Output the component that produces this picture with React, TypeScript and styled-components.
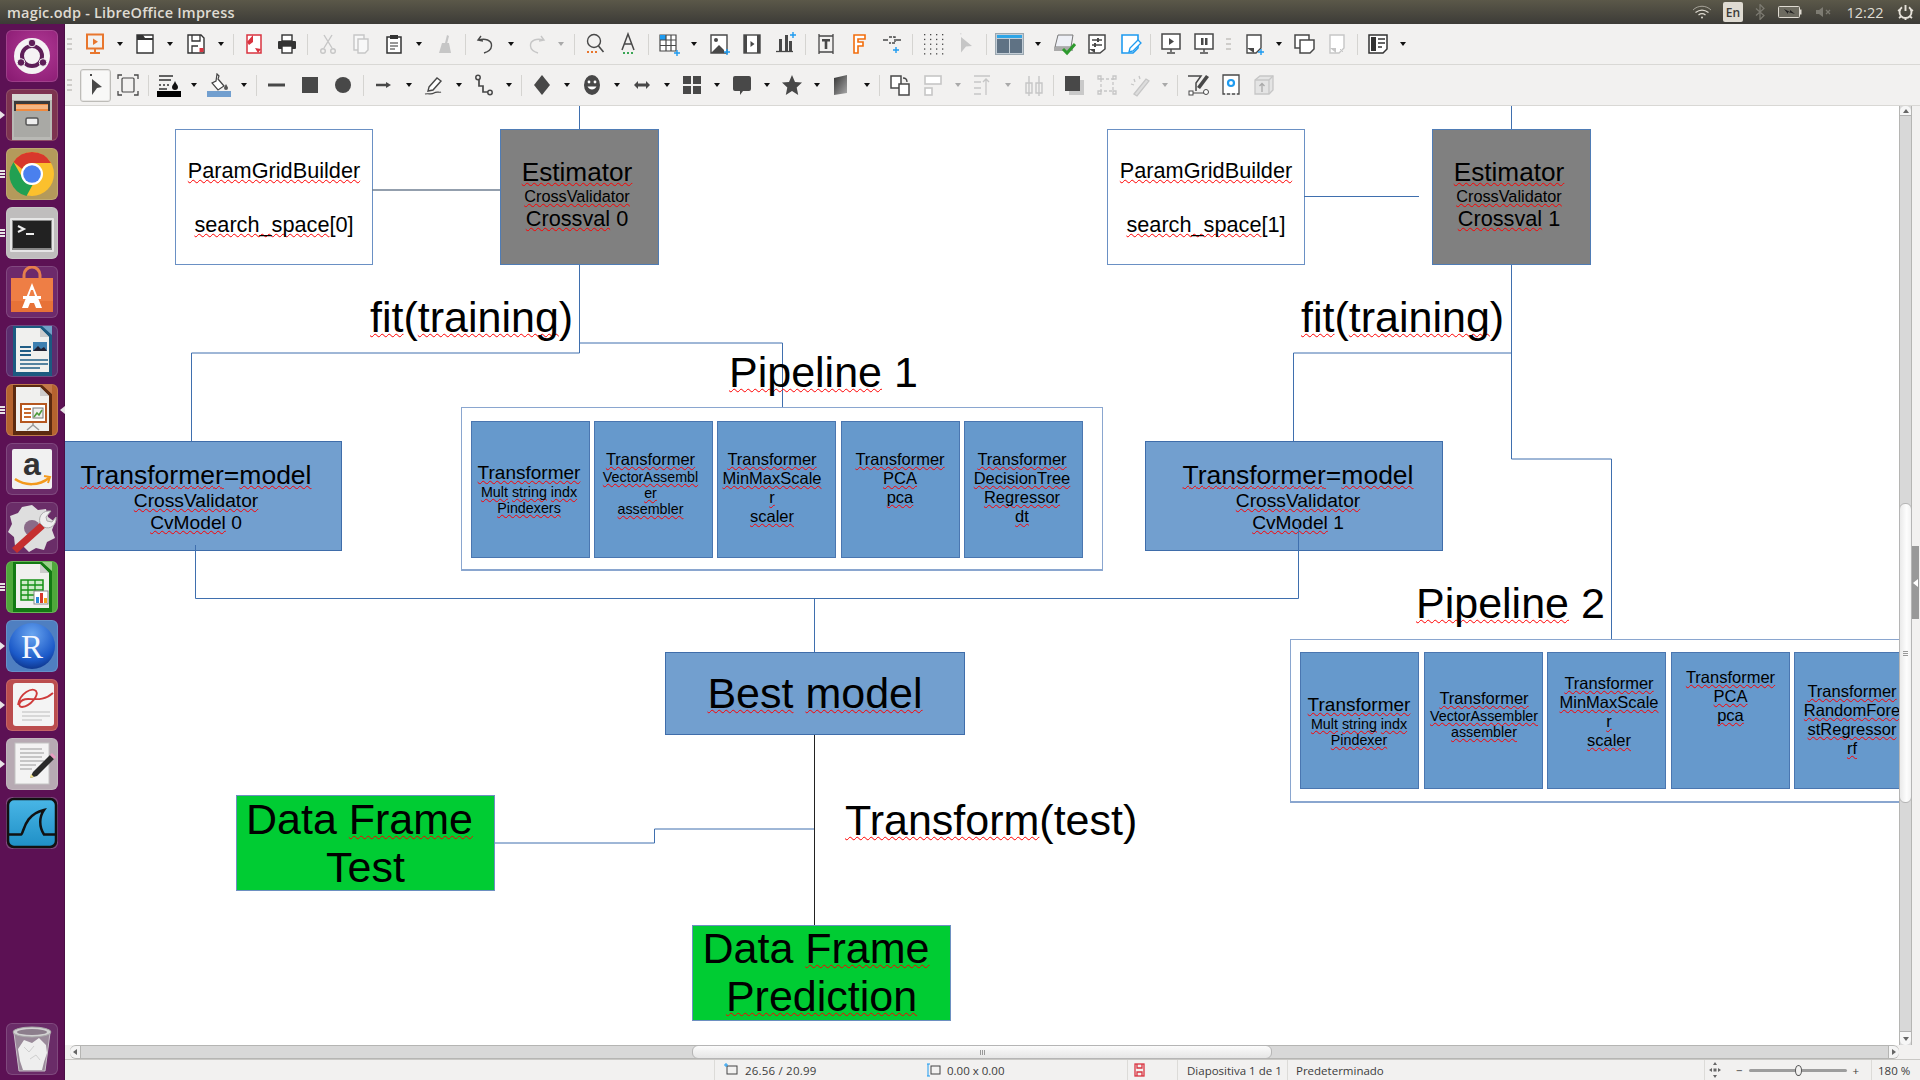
import React from 'react';
import styled, { createGlobalStyle } from 'styled-components';

const Global = createGlobalStyle`
  html, body { margin: 0; padding: 0; background: #f2f1f0; overflow: hidden; }
  #root { height: 100vh; }
  * { box-sizing: border-box; }
`;

const Root = styled.div`
  width: 1920px; height: 1080px; display: flex; flex-direction: column; overflow: hidden;
  font-family: "Open Sans", "Noto Sans", sans-serif;
`;
const TopBar = styled.header`
  height: 24px; flex: none; display: flex; align-items: center; padding: 0 0 0 7px;
  background: linear-gradient(#5b5849, #3c3b37);
`;
const Title = styled.div`
  flex: 1; color: #dfdbd2; font-size: 14.5px; font-weight: 600; letter-spacing: .2px; white-space: nowrap;
`;
const Tray = styled.div`
  display: flex; align-items: center; height: 24px;
`;
const TraySlot = styled.div<{ $w: number }>`
  width: ${p => p.$w}px; display: flex; align-items: center; justify-content: center; height: 24px;
`;
const LangBox = styled.div`
  width: 20px; height: 20px; border-radius: 2px; background: #dfdbd2; color: #3c3b37;
  font-size: 12px; font-weight: 600; display: flex; align-items: center; justify-content: center;
`;
const Clock = styled.div`
  color: #dfdbd2; font-size: 14.5px; width: 100%; text-align: center;
`;
const Body = styled.div`
  flex: 1; display: flex; min-height: 0;
`;
const Dock = styled.nav`
  width: 65px; flex: none; display: flex; flex-direction: column; gap: 7px; padding: 6px 0 5px 6px;
  background: #5c1154; border-right: 1px solid #4b0e45;
`;
const Tile = styled.div<{ $bg: string; $last?: boolean }>`
  position: relative; width: 52px; height: 52px; border-radius: 6px; flex: none;
  background: ${p => p.$bg}; box-shadow: inset 0 0 0 1px rgba(255,255,255,.14);
  margin-top: ${p => (p.$last ? 'auto' : '0')};
  svg { display: block; }
`;
const Pips = styled.div`
  position: absolute; left: -6px; top: 50%; transform: translateY(-50%);
  display: flex; flex-direction: column; gap: 1px;
`;
const Pip = styled.span`
  display: block; width: 5px; height: 2px; background: #e8e4e6;
`;
const RunArrow = styled.span`
  position: absolute; left: -6px; top: 50%; margin-top: -4px; width: 0; height: 0;
  border-left: 5px solid #e8e4e6; border-top: 4px solid transparent; border-bottom: 4px solid transparent;
`;
const FocusArrow = styled.span`
  position: absolute; right: -7px; top: 50%; margin-top: -4px; width: 0; height: 0;
  border-right: 5px solid #e8e4e6; border-top: 4px solid transparent; border-bottom: 4px solid transparent;
`;
const Main = styled.main`
  flex: 1; min-width: 0; display: flex; flex-direction: column;
`;
const Toolbar = styled.div<{ $dd: number }>`
  height: 41px; flex: none; display: flex; align-items: center; background: #f2f1f0;
  border-bottom: 1px solid #d9d8d5; padding-left: 1px;
  --dd: ${p => p.$dd}px;
`;
const Handle = styled.div<{ $w?: number; $center?: boolean }>`
  width: ${p => p.$w ?? 12}px; flex: none; height: 12px; display: flex; flex-direction: column;
  justify-content: space-between; align-items: ${p => (p.$center ? 'center' : 'flex-start')};
  padding-left: ${p => (p.$center ? 0 : 1)}px;
  span { display: block; width: 5px; height: 2px; background: #cfcdca; }
`;
const Tool = styled.div<{ $w?: number }>`
  width: ${p => p.$w ?? 33}px; flex: none; height: 40px; display: flex; align-items: center; justify-content: center;
`;
const ActiveTool = styled.div`
  width: 31px; height: 33px; border-radius: 3px; border: 1px solid #bdbcb8; background: #f8f8f7;
  display: flex; align-items: center; justify-content: center; box-shadow: 0 0 0 1px #e7e6e4 inset;
`;
const Drop = styled.div`
  width: var(--dd); flex: none; display: flex; align-items: center; justify-content: center;
`;
const DropArrow = styled.span<{ $off?: boolean }>`
  width: 0; height: 0; display: block;
  border-top: 4px solid ${p => (p.$off ? '#a9a9a9' : '#111')};
  border-left: 3.5px solid transparent; border-right: 3.5px solid transparent;
`;
const Sep = styled.div`
  width: 8px; flex: none; display: flex; justify-content: center;
  &::after { content: ''; display: block; width: 1px; height: 21px; background: #d5d4d1; }
`;
const Work = styled.div`
  flex: 1; display: flex; min-height: 0;
`;
const Canvas = styled.div`
  position: relative; flex: 1; min-width: 0; background: #fff; overflow: hidden;
`;
const VScroll = styled.div`
  width: 13px; flex: none; display: flex; flex-direction: column; align-items: stretch;
  background: #d8d8d8; border-left: 1px solid #b5b5b3; border-right: 1px solid #b5b5b3;
`;
const VStep = styled.div`
  height: 10px; flex: none; background: #f6f6f6; border-bottom: 1px solid #b0b0b0; border-radius: 5px 5px 0 0;
  display: flex; align-items: center; justify-content: center;
`;
const VStepDown = styled(VStep)`
  border-bottom: 0; border-top: 1px solid #b0b0b0; border-radius: 0 0 5px 5px; height: 14px;
`;
const VThumb = styled.div`
  height: 300px; flex: none; margin-top: 387px; margin-bottom: auto; border-radius: 6px;
  background: linear-gradient(90deg, #eaeaea, #fdfdfd 60%, #f2f2f2); border: 1px solid #b5b5b5;
  margin-left: -1px; margin-right: -1px;
  display: flex; flex-direction: column; gap: 1px; align-items: center; justify-content: center;
  span { width: 5px; height: 1px; background: #999; display: block; }
`;
const SidePanel = styled.div`
  width: 8px; flex: none; background: #f2f1f0; padding-top: 440px;
`;
const SideHandle = styled.div`
  width: 7px; height: 73px; background: #999; display: flex; align-items: center; justify-content: center;
  &::after { content: ''; border-right: 5px solid #fff; border-top: 4px solid transparent; border-bottom: 4px solid transparent; }
`;
const HRow = styled.div`
  height: 14px; flex: none; display: flex; background: #f2f1f0;
`;
const HTrack = styled.div`
  width: 1829px; margin-left: 5px; flex: none; display: flex; align-items: stretch;
  background: #d8d8d8; border-top: 1px solid #b5b5b3; border-bottom: 1px solid #b5b5b3; border-radius: 6px;
`;
const HStep = styled.div`
  width: 11px; flex: none; display: flex; align-items: center; justify-content: center;
  background: #f4f4f4; border-radius: 6px 0 0 6px; border-right: 1px solid #b5b5b3;
`;
const HStepEnd = styled(HStep)`
  border-right: 0; border-left: 1px solid #b5b5b3; border-radius: 0 6px 6px 0; margin-left: auto;
`;
const HThumb = styled.div`
  width: 580px; margin-left: 611px; border-radius: 6px; border: 1px solid #b5b5b5; margin-top: -1px; margin-bottom: -1px;
  background: linear-gradient(#fbfbfb, #e6e6e6);
  display: flex; gap: 1px; align-items: center; justify-content: center;
  span { height: 5px; width: 1px; background: #999; display: block; }
`;
const Tri = styled.span<{ $dir: 'l' | 'r' | 'u' | 'd' }>`
  width: 0; height: 0; display: block;
  ${p => p.$dir === 'l' && 'border-right:4px solid #666;border-top:3px solid transparent;border-bottom:3px solid transparent;'}
  ${p => p.$dir === 'r' && 'border-left:4px solid #666;border-top:3px solid transparent;border-bottom:3px solid transparent;'}
  ${p => p.$dir === 'u' && 'border-bottom:4px solid #666;border-left:3px solid transparent;border-right:3px solid transparent;'}
  ${p => p.$dir === 'd' && 'border-top:4px solid #666;border-left:3px solid transparent;border-right:3px solid transparent;'}
`;
const Status = styled.footer`
  height: 21px; flex: none; display: flex; align-items: center; background: #f2f1f0; border-top: 1px solid #c9c8c5;
  font-size: 11.5px; color: #3c3c3c; font-family: "Open Sans", sans-serif;
`;
const Cell = styled.div<{ $w?: number; $pad?: number; $gap?: number; $center?: boolean; $plain?: boolean }>`
  width: ${p => (p.$w ? `${p.$w}px` : 'auto')}; flex: ${p => (p.$w ? 'none' : '1')}; height: 100%;
  display: flex; align-items: center; white-space: nowrap;
  justify-content: ${p => (p.$center ? 'center' : 'flex-start')};
  padding-left: ${p => p.$pad ?? 0}px; gap: ${p => p.$gap ?? 0}px;
  border-left: ${p => (p.$plain ? '0' : '1px solid #dcdbd8')};
`;
const Coord = styled.span`
  letter-spacing: .2px;
`;
const ZoomTrack = styled.div`
  position: relative; width: 98px; height: 3px; background: #9d9d9d; border-radius: 2px;
`;
const ZoomKnob = styled.span`
  position: absolute; left: 46px; top: -4px; width: 7px; height: 11px; border-radius: 50%;
  background: #f2f1f0; border: 1px solid #555;
`;

/* ---------- diagram ---------- */
const OX = 65; const OY = 106;
type Box = { $x: number; $y: number; $w: number; $h: number; $pb?: number; $pr?: number; $pl?: number; $pt?: number };
const Node = styled.div<Box>`
  position: absolute; left: ${p => p.$x - OX}px; top: ${p => p.$y - OY}px;
  width: ${p => p.$w}px; height: ${p => p.$h}px;
  display: flex; flex-direction: column; align-items: center; justify-content: center;
  padding: ${p => p.$pt ?? 0}px ${p => p.$pr ?? 0}px ${p => p.$pb ?? 0}px ${p => p.$pl ?? 0}px;
  font-family: "Liberation Sans", Arial, sans-serif; color: #000; white-space: nowrap;
  border: 1px solid #4f7cb5;
`;
const ParamBox = styled(Node)`background: #fff; border-color: #6a90c4;`;
const EstimatorBox = styled(Node)`background: #808080;`;
const ModelBox = styled(Node)`background: #729fcf; border-color: #3f6daa;`;
const StepCell = styled(Node)`background: #6699cc; border-color: #4a76b0;`;
const FrameBox = styled(Node)`background: #fff; border-color: #8aa6cf; border-bottom-width: 2px; align-items: flex-start;`;
const GreenBox = styled(Node)`background: #00cc33; border-color: #6d90c0; justify-content: flex-start;`;
const Txt = styled.div<{ $s: number; $lh?: number; $pr?: number; $mt?: number }>`
  font-size: ${p => p.$s}px; line-height: ${p => (p.$lh ? `${p.$lh}px` : 'normal')};
  padding-right: ${p => p.$pr ?? 0}px; margin-top: ${p => p.$mt ?? 0}px;
`;
const Sq = styled.span`
  text-decoration: underline wavy #f00 1px; text-underline-offset: 1px; text-decoration-skip-ink: none;
`;
const Label = styled.div<{ $x: number; $y: number }>`
  position: absolute; left: ${p => p.$x - OX}px; top: ${p => p.$y - OY}px; white-space: nowrap;
  font: 43px "Liberation Sans", Arial, sans-serif; color: #000;
`;
const Wires = styled.svg`
  position: absolute; left: 0; top: 0; width: 1834px; height: 940px; pointer-events: none;
`;

const words = (s: string) => s.split(' ').map((w, i) => (
  <React.Fragment key={i}>{i > 0 ? ' ' : ''}<Sq>{w}</Sq></React.Fragment>
));

type CellDef = { x: number; lines: [string, number][]; pb?: number; pr?: number; pl?: number };
const p1Cells: CellDef[] = [
  { x: 471, lines: [['Transformer', 19], ['Mult string indx', 14.3], ['Pindexers', 14.3]], pb: 2, pr: 3 },
  { x: 594, lines: [['Transformer', 16.5], ['VectorAssembl', 14.3], ['er', 14.3], ['assembler', 14.3]], pb: 12, pr: 6 },
  { x: 717, lines: [['Transformer', 16.5], ['MinMaxScale', 16.5], ['r', 16.5], ['scaler', 16.5]], pb: 4, pr: 9 },
  { x: 841, lines: [['Transformer', 16.5], ['PCA', 16.5], ['pca', 16.5]], pb: 23, pr: 1 },
  { x: 964, lines: [['Transformer', 16.5], ['DecisionTree', 16.5], ['Regressor', 16.5], ['dt', 16.5]], pb: 4, pr: 3 },
];
const p2Cells: CellDef[] = [
  { x: 1300, lines: [['Transformer', 19], ['Mult string indx', 14.3], ['Pindexer', 14.3]], pr: 1 },
  { x: 1424, lines: [['Transformer', 16.5], ['VectorAssembler', 14.3], ['assembler', 14.3]], pb: 13, pl: 1 },
  { x: 1547, lines: [['Transformer', 16.5], ['MinMaxScale', 16.5], ['r', 16.5], ['scaler', 16.5]], pb: 18, pl: 5 },
  { x: 1671, lines: [['Transformer', 16.5], ['PCA', 16.5], ['pca', 16.5]], pb: 48 },
  { x: 1794, lines: [['Transformer', 16.5], ['RandomFore', 16.5], ['stRegressor', 16.5], ['rf', 16.5]], pb: 2, pr: 3 },
];
const Steps = ({ cells, y }: { cells: CellDef[]; y: number }) => (
  <>
    {cells.map(c => (
      <StepCell key={c.x} $x={c.x} $y={y} $w={119} $h={137} $pb={c.pb} $pr={c.pr} $pl={c.pl}>
        {c.lines.map(([t, s], i) => <Txt key={i} $s={s}>{words(t)}</Txt>)}
      </StepCell>
    ))}
  </>
);
const Param = ({ x, n }: { x: number; n: number }) => (
  <ParamBox $x={x} $y={129} $w={198} $h={136}>
    <Txt $s={21.7} $mt={2}><Sq>ParamGridBuilder</Sq></Txt>
    <Txt $s={21.7} $mt={28}><Sq>search_space</Sq>[{n}]</Txt>
  </ParamBox>
);
const Estimator = ({ x, n }: { x: number; n: number }) => (
  <EstimatorBox $x={x} $y={129} $w={159} $h={136} $pb={6} $pr={5}>
    <Txt $s={26.2}><Sq>Estimator</Sq></Txt>
    <Txt $s={16.3} $mt={-1}><Sq>CrossValidator</Sq></Txt>
    <Txt $s={21.7}><Sq>Crossval</Sq> {n}</Txt>
  </EstimatorBox>
);
const Model = ({ x, n, pl }: { x: number; n: number; pl: number }) => (
  <ModelBox $x={x} $y={441} $w={298} $h={110} $pl={pl} $pt={1}>
    <Txt $s={26.5}><Sq>Transformer</Sq>=<Sq>model</Sq></Txt>
    <Txt $s={19.2} $mt={-1}><Sq>CrossValidator</Sq></Txt>
    <Txt $s={19.2}><Sq>CvModel</Sq> {n}</Txt>
  </ModelBox>
);

const Diagram = () => (
  <Canvas>
    <Param x={175} n={0} />
    <Estimator x={500} n={0} />
    <Param x={1107} n={1} />
    <Estimator x={1432} n={1} />
    <Model x={44} n={0} pl={6} />
    <Model x={1145} n={1} pl={8} />
    <FrameBox $x={461} $y={407} $w={642} $h={164} />
    <Steps cells={p1Cells} y={421} />
    <FrameBox $x={1290} $y={639} $w={700} $h={164} />
    <Steps cells={p2Cells} y={652} />
    <ModelBox $x={665} $y={652} $w={300} $h={83}>
      <Txt $s={43}><Sq>Best</Sq> <Sq>model</Sq></Txt>
    </ModelBox>
    <GreenBox $x={236} $y={795} $w={259} $h={96}>
      <Txt $s={43} $lh={47.5} $pr={12}>Data <Sq>Frame</Sq></Txt>
      <Txt $s={43} $lh={47.5}>Test</Txt>
    </GreenBox>
    <GreenBox $x={692} $y={925} $w={259} $h={96}>
      <Txt $s={43} $lh={47.5} $pr={11} $mt={-1}>Data <Sq>Frame</Sq></Txt>
      <Txt $s={43} $lh={47.5}><Sq>Prediction</Sq></Txt>
    </GreenBox>
    <Wires viewBox="65 106 1834 940" fill="none">
      <g stroke="#3f6fae" strokeWidth="1">
        <path d="M579.5 106V129M1511.5 106V129" />
        <path d="M579.5 265V353H191.5V441" />
        <path d="M579.5 343H782.5V407" />
        <path d="M1511.5 265V459H1611.5V639" />
        <path d="M1511.5 353H1293.5V441" />
        <path d="M195.5 545V598.5H1298.5V523" />
        <path d="M814.5 598.5V652" />
        <path d="M495 843H654.5V829H814.5" />
        <path d="M1304 196.5H1419" />
      </g>
      <path d="M372 190H500" stroke="#6f7f92" strokeWidth="1.6" />
      <path d="M814.5 735V925" stroke="#222" strokeWidth="1" />
    </Wires>
    <Label $x={370} $y={293}><Sq>fit</Sq>(<Sq>training</Sq>)</Label>
    <Label $x={1301} $y={293}><Sq>fit</Sq>(<Sq>training</Sq>)</Label>
    <Label $x={729} $y={348}><Sq>Pipeline</Sq> 1</Label>
    <Label $x={1416} $y={579}><Sq>Pipeline</Sq> 2</Label>
    <Label $x={845} $y={796}><Sq>Transform</Sq>(test)</Label>
  </Canvas>
);

/* ---------- toolbar icons ---------- */
const D = '#484848'; const G = '#c6c6c6'; const O = '#e8762d'; const B = '#1e9bf0'; const R = '#d9333f';
const plus = (x: number, y: number) => <path d={`M${x - 3} ${y}h6M${x} ${y - 3}v6`} stroke={B} strokeWidth="1.4" fill="none" />;
const page = (c: string, f = '#fff') => <path d="M5 3h14v13l-5 5H5z" fill={f} stroke={c} strokeWidth="1.4" />;
const icons: Record<string, React.ReactNode> = {
  impress: <><g stroke={O} strokeWidth="2" fill="none"><rect x="4" y="2.5" width="16" height="14" /><path d="M12 17v3M7 21h10" /></g><path d="M10 6.5l5 3.2-5 3.2z" fill={O} /></>,
  open: <><path d="M4 3h16v18H4z" fill="#fff" stroke="#333" strokeWidth="1.4" /><path d="M4 3h6l2 3h8v2H4z" fill="#333" /></>,
  save: <><path d="M4 3h13l3 3v15H4z" fill="#fff" stroke="#333" strokeWidth="1.4" /><path d="M8 3v6h8V3M8 21v-7h6" fill="none" stroke="#333" strokeWidth="1.3" /><rect x="15.5" y="16" width="4" height="4" fill={R} /></>,
  pdf: <><path d="M5 3h14v18H5z" fill="#fff" stroke={R} strokeWidth="1.5" /><path d="M5 10l6-7v7l-4 3zM13 16l6 1-3 4z" fill={R} /></>,
  print: <><rect x="7" y="3" width="10" height="6" fill="#fff" stroke="#333" strokeWidth="1.4" /><rect x="3" y="9" width="18" height="8" rx="1" fill="#333" /><rect x="7" y="14" width="10" height="7" fill="#fff" stroke="#333" strokeWidth="1.4" /></>,
  cut: <g stroke={G} strokeWidth="1.4" fill="none"><path d="M8 3l8 13M16 3L8 16" /><circle cx="7" cy="19" r="2.3" /><circle cx="17" cy="19" r="2.3" /></g>,
  copy: <g stroke={G} strokeWidth="1.4" fill="#f8f8f8"><path d="M5 3h10v15H5z" /><path d="M9 7h10v11l-3 3H9z" /></g>,
  paste: <><path d="M5 5h14v16H5z" fill="#fff" stroke="#333" strokeWidth="1.5" /><rect x="8" y="3" width="8" height="4" fill="#333" /><path d="M8 11h8M8 14h8M8 17h5" stroke="#333" strokeWidth="1.2" /></>,
  brush: <><path d="M14 3l2 1-2 8-2-1z" fill={G} /><path d="M9 11h7l2 10H6z" fill={G} /></>,
  undo: <path d="M7 4L4 8l5 1M4.5 8C11 6 18 8 17.5 14c-.3 4-4 6-7.5 7" fill="none" stroke={D} strokeWidth="1.4" />,
  redo: <path d="M17 4l3 4-5 1M19.500 8C13 6 6 8 6.500 14c.3 4 4 6 7.500 7" fill="none" stroke={G} strokeWidth="1.4" />,
  find: <><circle cx="11" cy="9" r="6.500" fill="none" stroke={D} strokeWidth="1.4" /><path d="M15.500 14l5 6" stroke={D} strokeWidth="1.6" /><path d="M4 20h2M8 20h2M12 20h2" stroke={O} strokeWidth="1.8" /></>,
  spell: <><path d="M6 18L12 2l6 16M8.500 12h7" fill="none" stroke={D} strokeWidth="1.5" /><path d="M7 21h2M11 21h2M15 21h2" stroke="#3aa655" strokeWidth="1.8" /></>,
  table: <><path d="M3 3h16v16H3z" fill="#fff" stroke={D} strokeWidth="1.2" /><rect x="3" y="3" width="6" height="5" fill={B} /><path d="M3 8h16M3 13.500h16M9 3v16M14 3v16" stroke={D} strokeWidth="1.2" />{plus(20, 21)}</>,
  image: <><path d="M4 3h16v18H4z" fill="#fff" stroke={D} strokeWidth="1.4" /><circle cx="9" cy="8" r="2" fill={D} /><path d="M4 21l8-8 5 5v3z" fill={D} />{plus(20, 20)}</>,
  film: <><rect x="4" y="3" width="16" height="18" fill="#fff" stroke={D} strokeWidth="1.4" /><path d="M4 3h3v18H4zM17 3h3v18h-3z" fill={D} /><path d="M10.500 9l4 3-4 3z" fill={D} /></>,
  chart: <><path d="M6 7h3v12H6zM12 3h3v16h-3zM16 9h3v10h-3z" fill={D} /><path d="M3 19.500h17" stroke={D} strokeWidth="1.3" />{plus(20, 3)}</>,
  textbox: <><path d="M5 4h14M5 20h14M5 2v20M19 2v20" stroke={D} strokeWidth="1.3" fill="none" /><path d="M8 7h8v2.500h-2.700V17h-2.600V9.500H8z" fill={D} /></>,
  fontwork: <path d="M7 3h11v4h-7v3h5v4h-5v7H7z" fill="#fff" stroke="#f26d0c" strokeWidth="1.6" />,
  link: <><path d="M3 8h5M16 8h5" stroke={D} strokeWidth="1.4" /><path d="M9 5h6v6H9" fill="none" stroke={D} strokeWidth="1.4" strokeDasharray="3 1" />{plus(16, 18)}</>,
  grid: <g fill={D}>{[0, 1, 2, 3, 4].flatMap(r => [0, 1, 2, 3].map(c => <rect key={`${r}${c}`} x={3 + c * 6} y={2 + r * 4.800} width="1.300" height="1.300" />))}</g>,
  cursor: <><rect x="6" y="1" width="1.500" height="1.500" fill="#ddd" /><path d="M7 5l11 9-6 .5-5 6z" fill={G} /></>,
  layout: <><rect x="0.500" y="0.500" width="28" height="21" fill="#c3cdd6" stroke="#9aa7b0" /><rect x="2" y="2" width="25" height="3" fill="#2ea5e6" /><rect x="2" y="6" width="12" height="14" fill="#5f7284" /><rect x="15" y="6" width="12" height="14" fill="#5f7284" /></>,
  master: <><path d="M6 3h15l-2 12H3z" fill="#eef0f6" stroke="#777" /><path d="M2 15h19v4H2z" fill="#aaa" /><path d="M11 17l4 4 8-9" fill="none" stroke="#2e9a2e" strokeWidth="3" /></>,
  props: <><path d="M4 3h16v14l-5 4H4z" fill="#fff" stroke={D} strokeWidth="1.500" /><path d="M7 8h10M7 13h10" stroke={D} strokeWidth="1.300" /><rect x="12" y="6" width="2" height="4" fill={D} /><rect x="9" y="11" width="2" height="4" fill={D} /><path d="M4 17h6v4z" fill={D} /></>,
  note: <><path d="M4 3h16v13l-5 5H4z" fill="#fff" stroke={B} strokeWidth="1.600" /><path d="M11 20l1-4 8-8 3 3-8 8z" fill="#fff" stroke={B} strokeWidth="1.300" /></>,
  present: <><rect x="3" y="2" width="18" height="15" fill="#fff" stroke={D} strokeWidth="1.500" /><path d="M10 6l5 3.500-5 3.500z" fill={D} /><path d="M12 17v3M8 21h8" stroke={D} strokeWidth="1.400" /></>,
  pause: <><rect x="3" y="2" width="18" height="15" fill="#fff" stroke={D} strokeWidth="1.500" /><path d="M9 6h2.500v7H9zM13 6h2.500v7H13z" fill={D} /><path d="M12 17v3M8 21h8" stroke={D} strokeWidth="1.400" /></>,
  newslide: <>{page(D)}<path d="M5 16h7v5z" fill={D} />{plus(19, 20)}</>,
  dup: <><path d="M3 3h14v13H3z" fill="#fff" stroke={D} strokeWidth="1.500" /><path d="M8 8h14v9l-4 4H8z" fill="#fff" stroke={D} strokeWidth="1.500" /></>,
  del: <>{page(G)}<path d="M5 16h6v5z" fill={G} /><path d="M15 17l3 3M18 17l-3 3" stroke={G} /></>,
  panel: <><path d="M3 3h18v14l-4 4H3z" fill="#fff" stroke="#333" strokeWidth="1.500" /><rect x="5" y="5" width="5" height="14" fill="#333" /><path d="M12 7h7M12 11h7M12 15h4" stroke="#333" strokeWidth="1.300" /></>,
  select: <><rect x="7" y="1" width="2" height="2" fill={D} /><path d="M9 6l10 8-5 1-5 7z" fill={D} /></>,
  fit: <><rect x="6" y="5" width="12" height="14" rx="1" fill="none" stroke={D} strokeWidth="1.200" /><path d="M2 6V2h4M18 2h4v4M2 18v4h4M18 22h4v-4" fill="none" stroke={D} strokeWidth="1.300" /></>,
  linecolor: <><path d="M2 3h14M2 7h12" stroke="#333" strokeWidth="1.500" /><path d="M2 12h2M6 12h2M10 12h2M2 16h8" stroke="#333" strokeWidth="1.300" /><path d="M18 8c1 3 3 4 3 6a3 3 0 0 1-6 0c0-2 2-3 3-6z" fill="#111" /><rect x="0" y="18" width="24" height="6" fill="#000" /></>,
  fill: <><path d="M10 1l2 2-1 3 6 7-6 4-6-7 4-2z" fill="#fff" stroke="#444" strokeWidth="1.200" /><path d="M19 11c1 2 2 3 2 4a2 2 0 0 1-4 0c0-1 1-2 2-4z" fill="#555" /><rect x="0" y="18" width="24" height="6" fill="#729fcf" /></>,
  line: <path d="M3 12h17" stroke={D} strokeWidth="3" />,
  rect: <rect x="4" y="4" width="16" height="16" fill={D} />,
  ellipse: <circle cx="12" cy="12" r="8" fill={D} />,
  free: <><path d="M7 14l8-9 4 3-8 9-5 1z" fill="#fff" stroke={D} strokeWidth="1.400" /><path d="M3 21c4-1 6 1 9-1s5 0 7-1" fill="none" stroke={D} strokeWidth="1.200" /></>,
  connector: <><circle cx="6" cy="4.500" r="2.200" fill="none" stroke={D} strokeWidth="1.500" /><circle cx="18" cy="19.500" r="2.200" fill="none" stroke={D} strokeWidth="1.500" /><path d="M7 7v6h4v6h5" fill="none" stroke={D} strokeWidth="1.700" /></>,
  diamond: <path d="M12 2l8 10-8 10-8-10z" fill={D} />,
  smile: <><ellipse cx="12" cy="12" rx="8" ry="10" fill={D} /><circle cx="9" cy="9" r="1.400" fill="#fff" /><circle cx="15" cy="9" r="1.400" fill="#fff" /><path d="M7.500 13.500c2 4 7 4 9 0z" fill="#fff" /></>,
  blockarrow: <path d="M4 12l4-4v2.500h8V8l4 4-4 4v-2.500H8V16z" fill={D} />,
  flow: <path d="M3 3h8v8H3zM13 3h8v8h-8zM3 13h8v8H3zM13 13h8v8h-8z" fill={D} />,
  callout: <path d="M5 3h14a2 2 0 0 1 2 2v11a2 2 0 0 1-2 2h-6l-3 4v-4H5a2 2 0 0 1-2-2V5a2 2 0 0 1 2-2z" fill={D} />,
  star: <path d="M12 2l3 7 7 .6-5.300 4.800L18.200 22 12 18l-6.200 4 1.500-7.600L2 9.600 9 9z" fill={D} />,
  solid3d: <><defs><linearGradient id="g3" x1="0" x2="1" y1="0" y2="1"><stop offset="0" stopColor="#333" /><stop offset="1" stopColor="#aaa" /></linearGradient></defs><path d="M4 5l13-3v18L4 22z" fill="url(#g3)" /></>,
  arrange: <><rect x="3" y="3" width="10" height="12" fill="#fff" stroke={D} strokeWidth="1.500" /><rect x="11" y="11" width="10" height="11" fill="#fff" stroke={D} strokeWidth="1.500" /><path d="M15 5c3 0 4 2 4 4" fill="none" stroke={D} strokeWidth="1.300" /></>,
  align: <><rect x="4" y="3" width="16" height="8" fill="#fff" stroke={G} strokeWidth="1.600" /><rect x="4" y="15" width="7" height="7" fill="#fff" stroke={G} strokeWidth="1.600" /></>,
  dist: <path d="M3 3h16M3 9h7M3 15h7M3 21h7M15 22V6M12 9l3-3 3 3" fill="none" stroke={G} strokeWidth="1.300" />,
  space: <path d="M5 10h6v10H5zM15 10h6v10h-6zM8 3v20M18 3v20" fill="none" stroke={G} strokeWidth="1.400" />,
  shadow: <><rect x="7" y="7" width="15" height="15" fill="#c9c9c9" /><rect x="3" y="3" width="15" height="15" fill={D} /></>,
  crop: <><rect x="6" y="6" width="12" height="12" fill="none" stroke={G} strokeWidth="1.300" strokeDasharray="3 2" /><path d="M3 3h3v3H3zM18 3h3v3h-3zM3 18h3v3H3zM18 18h3v3h-3z" fill="none" stroke={G} strokeWidth="1.300" /></>,
  wand: <path d="M6 21L18 6l3 2L9 23zM6 6l1 3M11 3l1 3M3 11l3 1" fill="#ddd" stroke={G} strokeWidth="1.300" />,
  edit: <><path d="M2 3h13l-5 7v8" fill="none" stroke={D} strokeWidth="1.500" /><path d="M11 14L20 2l3 2-9 12z" fill={D} /><rect x="3" y="18" width="4" height="4" fill="#fff" stroke={D} /><circle cx="20" cy="19" r="2.500" fill="#fff" stroke={D} /><path d="M7 20h11" stroke={D} /></>,
  glue: <><path d="M4 2h16v19H4z" fill="#fff" stroke={D} strokeWidth="1.300" /><circle cx="12" cy="10" r="3" fill="#fff" stroke={B} strokeWidth="2.200" /><path d="M6 21h2M11 21h2M16 21h2" stroke="#fff" strokeWidth="1.500" /></>,
  extr: <><path d="M3 7l5-4h13v14l-4 4H3z" fill="#e4e4e4" stroke={G} strokeWidth="1.300" /><path d="M3 7h14v14M17 7l4-4" fill="none" stroke={G} strokeWidth="1.300" /><path d="M10 19v-8M7.500 13L10 10.500l2.500 2.500" fill="none" stroke="#aaa" strokeWidth="1.300" /></>,
  arrowline: <><path d="M4 12h11" stroke={D} strokeWidth="2.500" /><path d="M14 9l5 3-5 3z" fill={D} /></>,
};
const Ico = ({ n, w = 24, h = 24 }: { n: string; w?: number; h?: number }) => (
  <svg width={w} height={h} viewBox={`0 0 ${w} ${h}`}>{icons[n]}</svg>
);
const HandleMark = ({ w, center }: { w?: number; center?: boolean }) => <Handle $w={w} $center={center}><span /><span /><span /></Handle>;

const Items = ({ list }: { list: string[] }) => (
  <>
    {list.map((it, i) => {
      if (it === '|') return <Sep key={i} />;
      if (it === 'v') return <Drop key={i}><DropArrow /></Drop>;
      if (it === 'x') return <Drop key={i}><DropArrow $off /></Drop>;
      if (it === '=') return <HandleMark key={i} w={17} center />;
      if (it === 'layout') return <Tool key={i} $w={39}><Ico n="layout" w={30} h={22} /></Tool>;
      if (it === 'select') return <Tool key={i}><ActiveTool><Ico n="select" /></ActiveTool></Tool>;
      return <Tool key={i}><Ico n={it} /></Tool>;
    })}
  </>
);
const row1 = ['impress','v','open','v','save','v','|','pdf','print','|','cut','copy','paste','v','brush','|','undo','v','redo','x','|','find','spell','|','table','v','image','film','chart','|','textbox','fontwork','link','|','grid','cursor','|','layout','v','master','props','note','|','present','pause','=','newslide','v','dup','del','|','panel','v'];
const row2 = ['select','fit','|','linecolor','v','fill','v','|','line','rect','ellipse','|','arrowline','v','free','v','connector','v','|','diamond','v','smile','v','blockarrow','v','flow','v','callout','v','star','v','solid3d','v','|','arrange','align','x','dist','x','space','|','shadow','crop','wand','x','|','edit','glue','extr'];

/* ---------- dock ---------- */
const Z = ({ children }: { children: React.ReactNode }) => <svg width="52" height="52" viewBox="0 0 52 52">{children}</svg>;
const DocIcon = ({ frame, corner, children }: { frame: string; corner: string; children: React.ReactNode }) => (
  <Z>
    <path d="M7 1h30l9 9v41H7z" fill={frame} />
    <path d="M36 1l10 9v-9z" fill={corner} />
    <path d="M10 3h24l9 9v35H10z" fill="#f0f0ee" />
    <path d="M34 3l9 9h-9z" fill="#ccc" />
    {children}
  </Z>
);
const dock: { bg: string; pip?: number; arrow?: boolean; icon: React.ReactNode }[] = [
  { bg: 'radial-gradient(circle at 60% 40%, #b23a96, #86186f)', icon: <Z><circle cx="26" cy="26" r="18" fill="#f5f2f4" /><circle cx="26" cy="26" r="10" fill="none" stroke="#5e1e58" strokeWidth="4" /><circle cx="26" cy="13" r="3.800" fill="#5e1e58" stroke="#f5f2f4" /><circle cx="15" cy="32.500" r="3.800" fill="#5e1e58" stroke="#f5f2f4" /><circle cx="37" cy="32.500" r="3.800" fill="#5e1e58" stroke="#f5f2f4" /></Z> },
  { bg: '#7d3350', arrow: true, icon: <Z><path d="M6 5h40v6H6z" fill="#d8d8d4" /><path d="M6 11h40v40H6z" fill="#b9b9b5" /><path d="M8 12h36v10H8z" fill="#3b3b3b" /><path d="M10 15h32v7H10z" fill="#ef8a3f" /><path d="M10 17h32M10 19h32" stroke="#fbe3c8" /><path d="M8 22h36v26H8z" fill="#a9a9a5" /><rect x="20" y="29" width="12" height="7" rx="1.500" fill="#eee" stroke="#555" strokeWidth="1.500" /></Z> },
  { bg: '#b49a5b', pip: 3, icon: <Z><circle cx="26" cy="26" r="22" fill="#fbc02d" /><path d="M26 4a22 22 0 0 1 19 11H26a11 11 0 0 0-10 6L7.500 14A22 22 0 0 1 26 4z" fill="#d8382c" /><path d="M7.500 14l9 16a11 11 0 0 0 10 7l-6 11A22 22 0 0 1 7.500 14z" fill="#21a052" /><circle cx="26" cy="26" r="11" fill="#fff" /><circle cx="26" cy="26" r="8.800" fill="#4a80ee" /></Z> },
  { bg: '#bfbdbd', pip: 3, icon: <Z><rect x="4" y="11" width="44" height="34" rx="1" fill="#e6e6e6" /><rect x="6" y="13" width="40" height="30" fill="#888" /><rect x="7" y="14" width="38" height="27" fill="#222" /><path d="M12 19l6 3-6 3" fill="none" stroke="#eee" strokeWidth="2" /><path d="M20 27h8" stroke="#eee" strokeWidth="2" /></Z> },
  { bg: '#6d2a6b', icon: <Z><path d="M18 12V9a8 8 0 0 1 16 0v3" fill="none" stroke="#e67f4c" strokeWidth="3" /><path d="M5 12h42v34H5z" fill="#ee7e45" /><path d="M5 35h42v11H5z" fill="#e77238" /><path d="M26 17L16 42h6l2-5h4l2 5h6z" fill="#fff" /><path d="M17 30h18v3H17z" fill="#fff" /><path d="M25 24h2l2 6h-6z" fill="#ee7e45" /></Z> },
  { bg: '#5b2d6e', icon: <DocIcon frame="#1c5a80" corner="#6fa2c8"><path d="M14 22h11M14 26h11M14 30h11" stroke="#205d85" strokeWidth="2" /><rect x="27" y="17" width="14" height="9" fill="#3d7fb0" /><path d="M27 26l5-5 3 3 3-2 3 4z" fill="#223" /><path d="M14 35h28M14 39h28M14 43h20" stroke="#205d85" strokeWidth="1.700" /></DocIcon> },
  { bg: '#b5632f', pip: 3, icon: <DocIcon frame="#5c2a10" corner="#c4794a"><rect x="15" y="20" width="25" height="18" fill="#fff" stroke="#b5571f" strokeWidth="2" /><path d="M18 25h7M18 29h7M18 33h7" stroke="#c96b2e" strokeWidth="2" /><rect x="27" y="24" width="10" height="10" fill="#eee" stroke="#777" /><path d="M28 33l3-4 2 2 3-5" fill="none" stroke="#4a9a3a" strokeWidth="1.500" /><path d="M27 39v2l-6 5M27 41l6 5" stroke="#999" strokeWidth="1.500" fill="none" /></DocIcon> },
  { bg: '#6b2b69', icon: <Z><rect x="6" y="6" width="40" height="40" rx="2" fill="#f1f1f1" /><text x="26" y="32" textAnchor="middle" fontFamily="Liberation Sans" fontWeight="700" fontSize="32" fill="#333">a</text><path d="M9 36c10 7 24 7 34-1" fill="none" stroke="#f39a1e" strokeWidth="2.500" /><path d="M38 33l6 1-2 6" fill="none" stroke="#f39a1e" strokeWidth="2" /></Z> },
  { bg: '#6a2d68', icon: <Z><path d="M26 3l6 5 8-1 2 8 7 5-3 8 3 8-8 4-3 8-8-2-7 4-6-6-8 0-1-9-6-5 4-8-2-8 8-3 4-6z" fill="#dedede" /><circle cx="26" cy="26" r="8" fill="#8a6a88" /><path d="M6 46l30-27 5 5-30 27z" fill="#c52f2f" /><path d="M34 21c-2-7 3-13 11-12l-5 6 1 4 5 1 4-5c1 8-6 13-12 10z" fill="#eee" stroke="#aaa" /></Z> },
  { bg: '#4fa83b', pip: 3, icon: <DocIcon frame="#137a13" corner="#9ad08a"><rect x="15" y="19" width="22" height="20" fill="#cfeac8" stroke="#149014" strokeWidth="1.500" /><path d="M15 24h22M15 29h22M15 34h22M22 19v20M29 19v20" stroke="#149014" strokeWidth="1.300" /><rect x="28" y="30" width="14" height="13" fill="#fff" stroke="#888" /><rect x="30" y="36" width="3" height="6" fill="#2a88d8" /><rect x="34" y="32" width="3" height="10" fill="#d8382c" /><rect x="38" y="37" width="3" height="5" fill="#f4a31c" /></DocIcon> },
  { bg: '#4f7fc1', arrow: true, icon: <Z><defs><radialGradient id="rb" cx=".5" cy=".25" r=".8"><stop offset="0" stopColor="#6aa6f0" /><stop offset=".7" stopColor="#1b59c8" /><stop offset="1" stopColor="#0c2f80" /></radialGradient></defs><circle cx="26" cy="26" r="23" fill="url(#rb)" /><text x="26" y="38" textAnchor="middle" fontFamily="Liberation Serif" fontSize="33" fill="#f2f6ff">R</text></Z> },
  { bg: '#bb4d4e', arrow: true, icon: <Z><rect x="7" y="4" width="41" height="43" rx="3" fill="#f4f4f4" /><path d="M12 26c2-12 14-18 18-14 3 4-5 15-14 16-5 0-3-8 6-8 8 0 16 2 25-6" fill="none" stroke="#cf3b3b" strokeWidth="1.800" /><path d="M16 33h28M16 37h28M16 41h20" stroke="#bbb" strokeWidth="1.200" /></Z> },
  { bg: '#b7aab3', arrow: true, icon: <Z><rect x="9" y="5" width="34" height="41" fill="#f3f3f3" stroke="#c4c4c4" /><path d="M14 11h22M14 15h24M14 19h22M14 23h24M14 27h16M14 31h12" stroke="#999" strokeWidth="1" /><path d="M24 40l3-6 17-17 4 4-17 17z" fill="#2a2a2a" /><path d="M44 17l4 4 2-2-4-4z" fill="#e89ac0" /><path d="M24 40l1-4 3 3z" fill="#f0e08a" /></Z> },
  { bg: '#6a2c68', icon: <Z><defs><linearGradient id="ws" x1="0" x2="0" y1="0" y2="1"><stop offset="0" stopColor="#49b6e6" /><stop offset="1" stopColor="#1f8fc6" /></linearGradient></defs><rect x="2" y="2" width="48" height="48" rx="6" fill="url(#ws)" stroke="#111" strokeWidth="2.500" /><path d="M3 37.500H15C18 37 17 18 38 13C33 20 33 30 38 37.500H49" fill="none" stroke="#111" strokeWidth="2.500" /></Z> },
];

const Wifi = () => (
  <svg width="20" height="14" viewBox="0 0 20 14" fill="none" stroke="#dfdbd2">
    <path d="M1 5c5-5 13-5 18 0" strokeOpacity=".6" /><path d="M3.500 7.500c4-3 9-3 13 0" strokeWidth="1.300" /><path d="M6.500 10c2-1.500 5-1.500 7 0" strokeWidth="1.300" /><circle cx="10" cy="12.500" r="1" fill="#dfdbd2" stroke="none" />
  </svg>
);
const Bluetooth = () => (
  <svg width="10" height="16" viewBox="0 0 10 16" fill="none" stroke="#7d7b72" strokeWidth="1.200"><path d="M1 4.500l8 7-4 4V.5l4 4-8 7" /></svg>
);
const Battery = () => (
  <svg width="24" height="12" viewBox="0 0 24 12"><rect x=".5" y=".5" width="21" height="11" rx="1" fill="#6d6b60" stroke="#dfdbd2" /><rect x="22" y="3.500" width="1.500" height="5" fill="#dfdbd2" /><path d="M6 3l6 3 0-2 5 4-7-2v2z" fill="#222" /></svg>
);
const Speaker = () => (
  <svg width="18" height="12" viewBox="0 0 18 12"><path d="M1 4h3l4-3v10L4 8H1z" fill="#7d7b72" /><path d="M11 4l4 4M15 4l-4 4" stroke="#7d7b72" strokeWidth="1.300" /></svg>
);
const PowerGear = () => (
  <svg width="17" height="17" viewBox="0 0 17 17" fill="none" stroke="#e6e2da" strokeWidth="1.900"><path d="M5 3.200a6 6 0 1 0 7 0" /><path d="M8.500 1v6" /><path d="M1 6l2 1M16 6l-2 1M2 14l2-1.500M15 14l-2-1.500M8.500 16v-1.500" /></svg>
);
const SmallPos = () => (
  <svg width="14" height="14" viewBox="0 0 14 14" fill="none"><rect x="3" y="3" width="10" height="8" stroke="#444" /><path d="M2 0v4M0 2h4" stroke={B} /></svg>
);
const SmallSize = () => (
  <svg width="14" height="14" viewBox="0 0 14 14" fill="none"><rect x="4" y="3" width="9" height="8" stroke="#444" /><path d="M1 1v12M0 1h3M0 13h3" stroke={B} /></svg>
);
const SmallSave = () => (
  <svg width="11" height="14" viewBox="0 0 11 14" fill="none" stroke={R} strokeWidth="1.300"><rect x="1" y="1" width="9" height="12" /><path d="M3 1v4h5V1M3 13V9h5v4" /></svg>
);
const SmallFit = () => (
  <svg width="12" height="16" viewBox="0 0 12 16" fill="#666"><path d="M6 0l2 3H4zM6 16l-2-3h4zM0 8l3-2v4zM12 8l-3 2V6z" /><rect x="4.500" y="6.500" width="3" height="3" /></svg>
);

export default function App() {
  return (
    <Root>
      <Global />
      <TopBar>
        <Title>magic.odp - LibreOffice Impress</Title>
        <Tray>
          <TraySlot $w={32}><Wifi /></TraySlot>
          <TraySlot $w={30}><LangBox>En</LangBox></TraySlot>
          <TraySlot $w={24}><Bluetooth /></TraySlot>
          <TraySlot $w={36}><Battery /></TraySlot>
          <TraySlot $w={32}><Speaker /></TraySlot>
          <TraySlot $w={50}><Clock>12:22</Clock></TraySlot>
          <TraySlot $w={30}><PowerGear /></TraySlot>
        </Tray>
      </TopBar>
      <Body>
        <Dock>
          {dock.map((d, i) => (
            <Tile key={i} $bg={d.bg}>
              {d.icon}
              {d.pip === 3 && <Pips><Pip /><Pip /><Pip /></Pips>}
              {d.arrow && <RunArrow />}
              {i === 6 && <FocusArrow />}
            </Tile>
          ))}
          <Tile $bg="#6a2c68" $last>
            <Z>
              <path d="M8 10h36l-5 38H13z" fill="#9a8a9a" stroke="#c8c0c8" />
              <ellipse cx="26" cy="9" rx="19" ry="5" fill="#d2d2d2" stroke="#aaa" />
              <ellipse cx="26" cy="9" rx="15" ry="3" fill="#8c7e8c" />
              <path d="M12 26l6-9 8 3 7-5 7 7 1 8-3 9-2 8H17l-3-9z" fill="#eeeeee" />
              <path d="M18 24l5 5 5-6M24 36l6-4 4 5" fill="none" stroke="#cfcfcf" />
            </Z>
          </Tile>
        </Dock>
        <Main>
          <Toolbar $dd={17.5}>
            <HandleMark /><Items list={row1} />
          </Toolbar>
          <Toolbar $dd={17}>
            <HandleMark w={12.5} /><Items list={row2} />
          </Toolbar>
          <Work>
            <Diagram />
            <VScroll>
              <VStep><Tri $dir="u" /></VStep>
              <VThumb><span /><span /><span /></VThumb>
              <VStepDown><Tri $dir="d" /></VStepDown>
            </VScroll>
            <SidePanel><SideHandle /></SidePanel>
          </Work>
          <HRow>
            <HTrack>
              <HStep><Tri $dir="l" /></HStep>
              <HThumb><span /><span /><span /></HThumb>
              <HStepEnd><Tri $dir="r" /></HStepEnd>
            </HTrack>
          </HRow>
          <Status>
            <Cell $plain />
            <Cell $w={213} $pad={9} $gap={7}><SmallPos /><Coord>26.56 / 20.99</Coord></Cell>
            <Cell $w={200} $pad={0} $gap={6} $plain><SmallSize />0.00 x 0.00</Cell>
            <Cell $w={50} $pad={6}><SmallSave /></Cell>
            <Cell $w={110} $pad={9}>Diapositiva 1 de 1</Cell>
            <Cell $w={417} $pad={8}>Predeterminado</Cell>
            <Cell $w={26} $pad={4}><SmallFit /></Cell>
            <Cell $w={141} $pad={6} $gap={6} $plain>−<ZoomTrack><ZoomKnob /></ZoomTrack>+</Cell>
            <Cell $w={49} $pad={6}>180 %</Cell>
          </Status>
        </Main>
      </Body>
    </Root>
  );
}
